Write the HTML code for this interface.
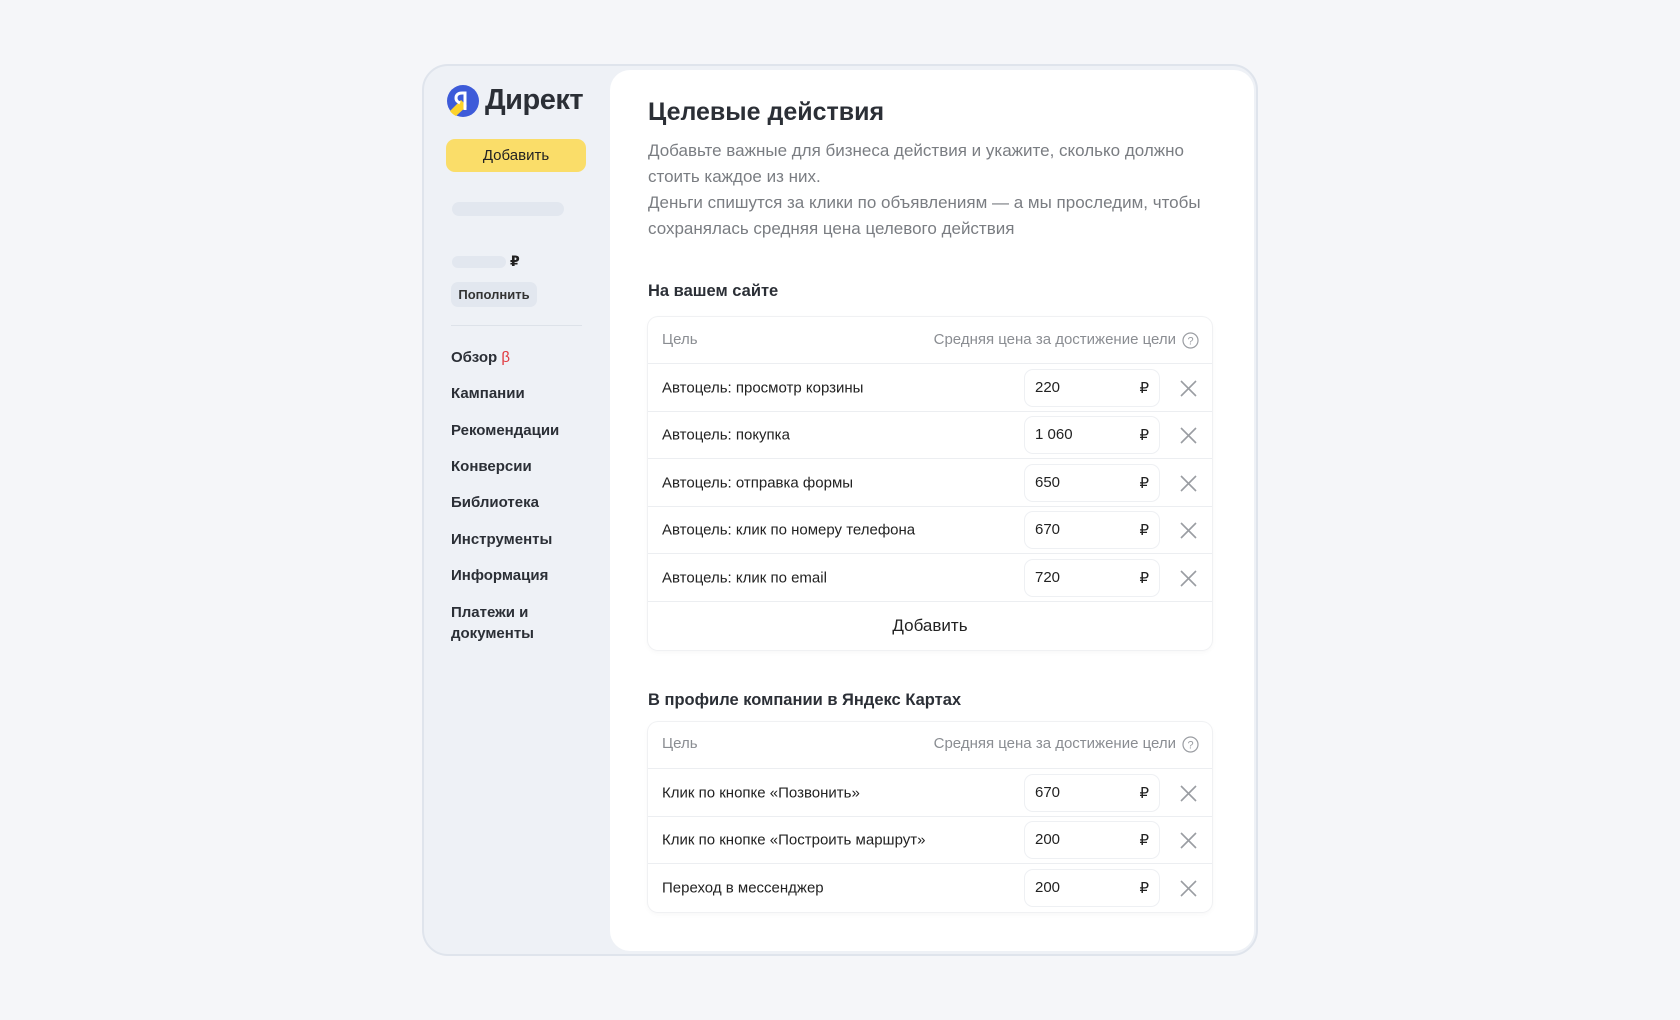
<!DOCTYPE html>
<html><head><meta charset="utf-8"><style>
*{box-sizing:border-box;margin:0;padding:0}
body{width:1680px;height:1020px;background:#f5f6f9;font-family:"Liberation Sans","DejaVu Sans",sans-serif;position:relative;overflow:hidden;color:#222}
.frame{position:absolute;left:422px;top:64px;width:836px;height:892px;background:#eef1f6;border:2px solid #dfe4ec;border-radius:26px}
.panel{position:absolute;left:610px;top:70px;width:644px;height:881px;background:#fff;border-radius:20px 20px 20px 20px}
.abs{position:absolute}
.nav{position:absolute;left:451px;font-size:15px;font-weight:bold;color:#2b2f36;line-height:21px}
.sk{position:absolute;background:#e2e7ef;border-radius:8px}
.p{position:absolute;left:648px;font-size:17px;color:#7a7d82;line-height:26px}
.tbl{position:absolute;left:648px;width:564px;background:#fff;border-radius:10px;box-shadow:0 0 0 1px #f0f1f3,0 2px 6px rgba(0,0,0,.04)}
.row{position:absolute;left:0;width:564px;border-top:1px solid #eceef1;font-size:15px;color:#222}
.row .l{position:absolute;left:14px;top:50%;transform:translateY(-50%)}
.inp{position:absolute;left:377px;width:134px;height:36px;top:50%;margin-top:-18px;border-radius:8px;box-shadow:0 0 0 1px #eef0f3;font-size:15px}
.inp .v{position:absolute;left:10px;top:9px}
.inp .r{position:absolute;right:10px;top:9px}
.x{position:absolute;left:532px;top:50%;margin-top:-8px}
.hd{position:absolute;left:0;width:564px;font-size:15px;color:#8a8d92}
</style></head><body>
<div class="frame"></div>
<div class="panel"></div>
<svg class="abs" style="left:447px;top:85px" width="32" height="32" viewBox="0 0 32 32"><circle cx="16" cy="16" r="16" fill="#3d5bd9"/><path d="M3 26 L14 15 L20 21 L9 31 A16 16 0 0 1 3 26z" fill="#fcd22c"/><path d="M18 25V8h-3c-4 0-6 2-6 5s2 4 4 5" stroke="#fff" stroke-width="3" fill="none"/></svg>
<div class="abs" style="left:485px;top:84px;font-size:29px;font-weight:bold;color:#2b2f36;letter-spacing:-0.5px">Директ</div>
<div class="abs" style="left:446px;top:139px;width:140px;height:33px;background:#fadd69;border-radius:9px;text-align:center;line-height:33px;font-size:15px;color:#222">Добавить</div>
<div class="sk" style="left:452px;top:202px;width:112px;height:14px"></div>
<div class="sk" style="left:452px;top:256px;width:54px;height:12px"></div>
<div class="abs" style="left:510px;top:253px;font-size:14px;font-weight:bold">₽</div>
<div class="abs" style="left:451px;top:282px;width:86px;height:25px;background:#e2e7ef;border-radius:7px;text-align:center;line-height:25px;font-size:13px;font-weight:bold;color:#333">Пополнить</div>
<div class="abs" style="left:451px;top:325px;width:131px;height:1px;background:#dde2e9"></div>
<div class="nav" style="top:347px">Обзор <span style="color:#e0393e;font-weight:normal">β</span></div>
<div class="nav" style="top:383px">Кампании</div>
<div class="nav" style="top:420px">Рекомендации</div>
<div class="nav" style="top:456px">Конверсии</div>
<div class="nav" style="top:492px">Библиотека</div>
<div class="nav" style="top:529px">Инструменты</div>
<div class="nav" style="top:565px">Информация</div>
<div class="nav" style="top:602px">Платежи и<br>документы</div>

<div class="abs" style="left:648px;top:98px;font-size:25px;font-weight:bold;color:#2b2f36">Целевые действия</div>
<div class="p" style="top:138px">Добавьте важные для бизнеса действия и укажите, сколько должно<br>стоить каждое из них.<br>Деньги спишутся за клики по объявлениям — а мы проследим, чтобы<br>сохранялась средняя цена целевого действия</div>
<div class="abs" style="left:648px;top:282px;font-size:16.5px;font-weight:bold;color:#2b2f36">На вашем сайте</div>

<div class="tbl" style="top:317px;height:333px">
<div class="hd" style="top:14px"><span style="position:absolute;left:14px">Цель</span><span style="position:absolute;right:36px">Средняя цена за достижение цели</span><svg style="position:absolute;left:534px;top:1px" width="17" height="17" viewBox="0 0 17 17"><circle cx="8.5" cy="8.5" r="7.5" fill="none" stroke="#9a9da2" stroke-width="1.2"/><text x="8.5" y="12.5" font-size="11" text-anchor="middle" fill="#9a9da2" font-family="Liberation Sans">?</text></svg></div>
<div class="row" style="top:46px;height:48px"><span class="l">Автоцель: просмотр корзины</span><div class="inp"><span class="v">220</span><span class="r">₽</span></div><svg class="x" width="17" height="17"><path d="M1 1L16 16M16 1L1 16" stroke="#9a9da2" stroke-width="1.6"/></svg></div>
<div class="row" style="top:94px;height:47px"><span class="l">Автоцель: покупка</span><div class="inp"><span class="v">1 060</span><span class="r">₽</span></div><svg class="x" width="17" height="17"><path d="M1 1L16 16M16 1L1 16" stroke="#9a9da2" stroke-width="1.6"/></svg></div>
<div class="row" style="top:141px;height:48px"><span class="l">Автоцель: отправка формы</span><div class="inp"><span class="v">650</span><span class="r">₽</span></div><svg class="x" width="17" height="17"><path d="M1 1L16 16M16 1L1 16" stroke="#9a9da2" stroke-width="1.6"/></svg></div>
<div class="row" style="top:189px;height:47px"><span class="l">Автоцель: клик по номеру телефона</span><div class="inp"><span class="v">670</span><span class="r">₽</span></div><svg class="x" width="17" height="17"><path d="M1 1L16 16M16 1L1 16" stroke="#9a9da2" stroke-width="1.6"/></svg></div>
<div class="row" style="top:236px;height:48px"><span class="l">Автоцель: клик по email</span><div class="inp"><span class="v">720</span><span class="r">₽</span></div><svg class="x" width="17" height="17"><path d="M1 1L16 16M16 1L1 16" stroke="#9a9da2" stroke-width="1.6"/></svg></div>
<div class="row" style="top:284px;height:49px;text-align:center;line-height:48px;font-size:17px">Добавить</div>
</div>

<div class="abs" style="left:648px;top:691px;font-size:16.5px;font-weight:bold;color:#2b2f36">В профиле компании в Яндекс Картах</div>
<div class="tbl" style="top:722px;height:190px">
<div class="hd" style="top:13px"><span style="position:absolute;left:14px">Цель</span><span style="position:absolute;right:36px">Средняя цена за достижение цели</span><svg style="position:absolute;left:534px;top:1px" width="17" height="17" viewBox="0 0 17 17"><circle cx="8.5" cy="8.5" r="7.5" fill="none" stroke="#9a9da2" stroke-width="1.2"/><text x="8.5" y="12.5" font-size="11" text-anchor="middle" fill="#9a9da2" font-family="Liberation Sans">?</text></svg></div>
<div class="row" style="top:46px;height:48px"><span class="l">Клик по кнопке «Позвонить»</span><div class="inp"><span class="v">670</span><span class="r">₽</span></div><svg class="x" width="17" height="17"><path d="M1 1L16 16M16 1L1 16" stroke="#9a9da2" stroke-width="1.6"/></svg></div>
<div class="row" style="top:94px;height:47px"><span class="l">Клик по кнопке «Построить маршрут»</span><div class="inp"><span class="v">200</span><span class="r">₽</span></div><svg class="x" width="17" height="17"><path d="M1 1L16 16M16 1L1 16" stroke="#9a9da2" stroke-width="1.6"/></svg></div>
<div class="row" style="top:141px;height:49px"><span class="l">Переход в мессенджер</span><div class="inp"><span class="v">200</span><span class="r">₽</span></div><svg class="x" width="17" height="17"><path d="M1 1L16 16M16 1L1 16" stroke="#9a9da2" stroke-width="1.6"/></svg></div>
</div>
</body></html>
